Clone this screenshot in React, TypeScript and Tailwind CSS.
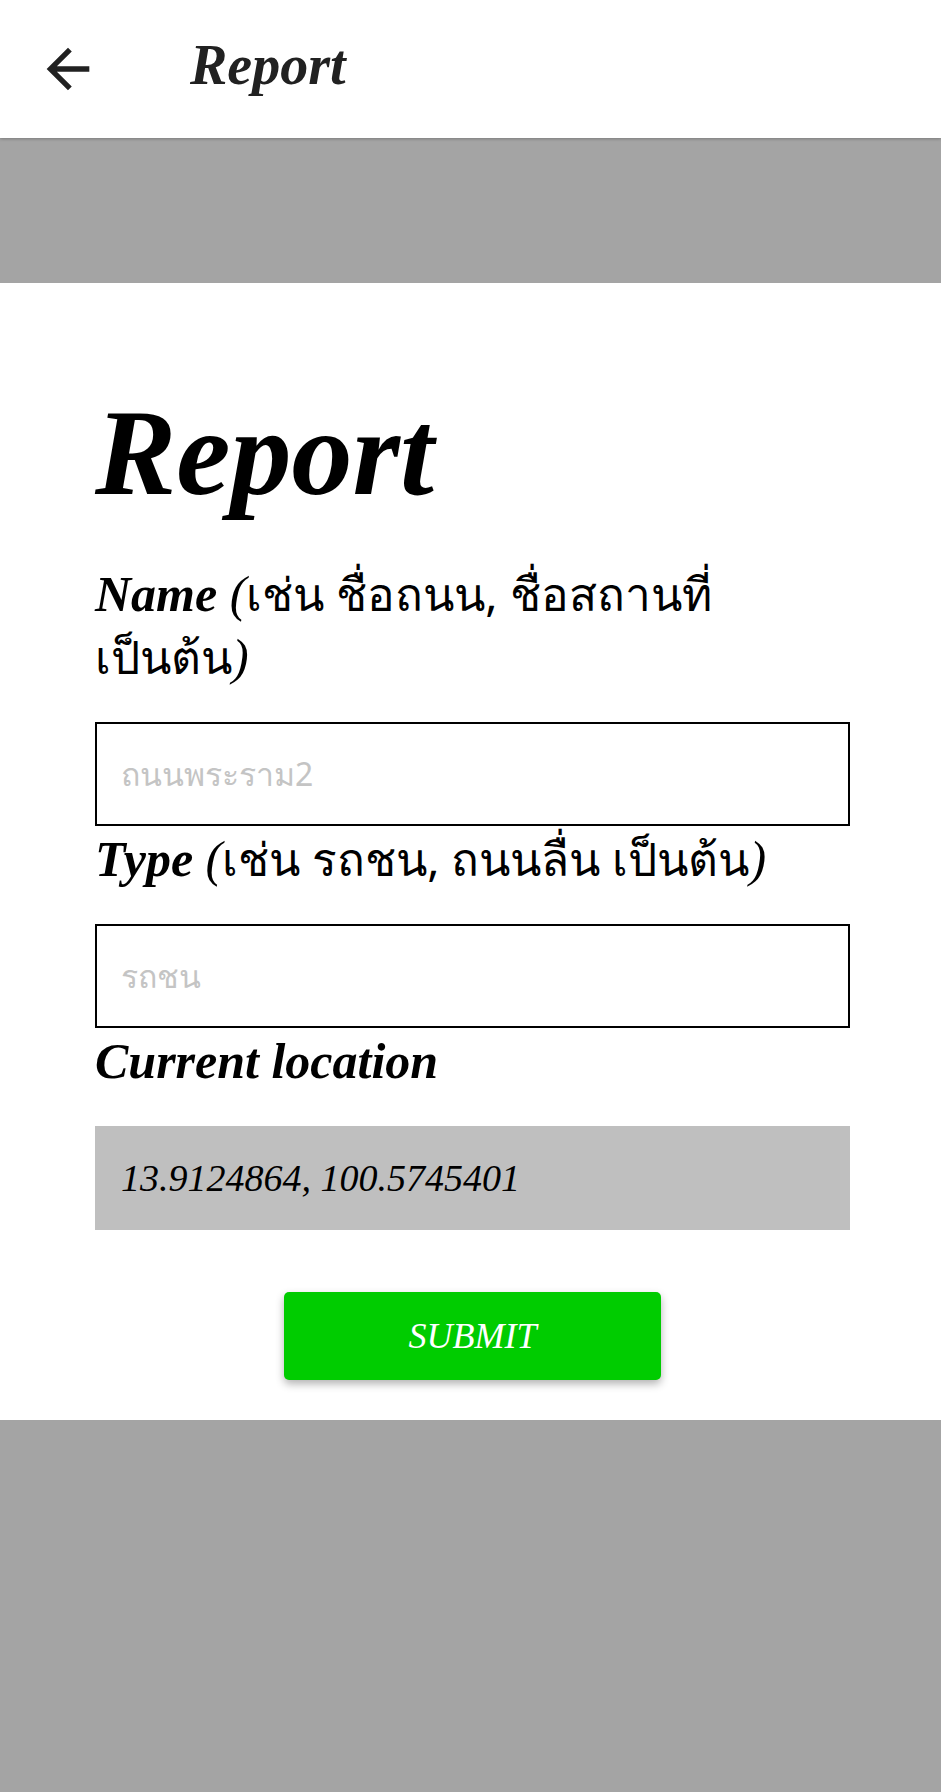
import { ReactNode } from "react";

const serif = "font-['Liberation_Serif',serif] italic";

function Label({ children }: { children: ReactNode }) {
  return <div className={`${serif} text-[50px] leading-[63px] text-black`}>{children}</div>;
}

// thai part of a label, upright and a bit smaller
function Th({ children }: { children: ReactNode }) {
  return <span className="font-['Noto_Sans',sans-serif] text-[46px] leading-[40px] not-italic">{children}</span>;
}

function Field({ placeholder }: { placeholder: string }) {
  return (
    <div className="mt-[33px] flex h-[104px] items-center border-2 border-black bg-white pl-[24px]">
      <span className="font-['Noto_Sans',sans-serif] text-[32px] text-[#c4c4c4]">{placeholder}</span>
    </div>
  );
}

export default function App() {
  return (
    <div className="flex min-h-screen flex-col bg-white">
      {/* app bar */}
      <header className="relative z-10 flex h-[138px] items-center bg-white shadow-[0_1px_3px_rgba(0,0,0,0.25)]">
        <button className="ml-[36px] flex h-[64px] w-[64px] items-center justify-center text-[#212121]">
          <svg viewBox="0 0 24 24" className="h-[64px] w-[64px]" fill="currentColor">
            <path d="M20 11H7.83l5.59-5.59L12 4l-8 8 8 8 1.41-1.41L7.83 13H20v-2z" />
          </svg>
        </button>
        <h1 className={`${serif} mb-[9px] ml-[90px] text-[56px] font-bold text-[#212121]`}>Report</h1>
      </header>

      <div className="h-[145px] bg-[#a4a4a4]" />

      <main className="pt-[97px] pb-[40px] pl-[95px] pr-[91px]">
        <h2 className={`${serif} text-[122px] leading-[146px] font-bold text-black`}>Report</h2>

        <div className="mt-[37px]">
          <Label>
            <b>Name</b> (<Th>เช่น ชื่อถนน, ชื่อสถานที่</Th>
            <br />
            <Th>เป็นต้น</Th>)
          </Label>
          <Field placeholder="ถนนพระราม2" />
        </div>

        <div className="mt-[2px]">
          <Label>
            <b>Type</b> (<Th>เช่น รถชน, ถนนลื่น เป็นต้น</Th>)
          </Label>
          <Field placeholder="รถชน" />
        </div>

        <div className="mt-[2px]">
          <Label>
            <b>Current location</b>
          </Label>
          <div className="mt-[33px] flex h-[104px] items-center bg-[#bfbfbf] pl-[26px]">
            <span className={`${serif} text-[38px] text-black`}>13.9124864, 100.5745401</span>
          </div>
        </div>

        <div className="mt-[62px] flex justify-center">
          <button className="flex h-[88px] w-[377px] items-center justify-center rounded-[5px] bg-[#00cc00] shadow-[0_4px_8px_rgba(0,0,0,0.3)]">
            <span className={`${serif} text-[36px] text-white`}>SUBMIT</span>
          </button>
        </div>
      </main>

      <div className="flex-1 bg-[#a4a4a4]" />
    </div>
  );
}
